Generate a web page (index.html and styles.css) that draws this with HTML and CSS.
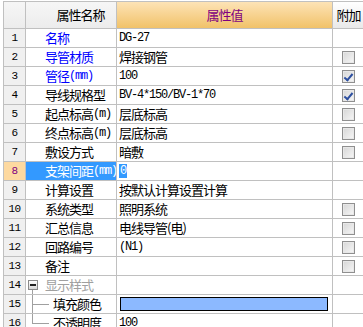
FILE: index.html
```html
<!DOCTYPE html>
<html lang="zh-CN">
  <head>
    <meta charset="UTF-8" />
    <title>属性编辑</title>
    <link rel="stylesheet" href="styles.css">
  </head>
  <body>
    <div class="grid">
      <div class="hd num"></div>
      <div class="hd name center">属性名称</div>
      <div class="hd value-hd">属性值</div>
      <div class="hd extra-hd">附加</div>

      <div class="num">1</div>
      <div class="name link">名称</div>
      <div class="value"><span class="latin">DG-27</span></div>
      <div class="extra"></div>

      <div class="num">2</div>
      <div class="name link">导管材质</div>
      <div class="value">焊接钢管</div>
      <div class="extra"><span class="check"></span></div>

      <div class="num">3</div>
      <div class="name link">管径<span class="latin">(mm)</span></div>
      <div class="value"><span class="latin">100</span></div>
      <div class="extra"><span class="check on"></span></div>

      <div class="num">4</div>
      <div class="name">导线规格型</div>
      <div class="value"><span class="latin">BV-4*150/BV-1*70</span></div>
      <div class="extra"><span class="check on"></span></div>

      <div class="num">5</div>
      <div class="name">起点标高<span class="latin">(m)</span></div>
      <div class="value">层底标高</div>
      <div class="extra"><span class="check"></span></div>

      <div class="num">6</div>
      <div class="name">终点标高<span class="latin">(m)</span></div>
      <div class="value">层底标高</div>
      <div class="extra"><span class="check"></span></div>

      <div class="num">7</div>
      <div class="name">敷设方式</div>
      <div class="value">暗敷</div>
      <div class="extra"><span class="check"></span></div>

      <div class="num current">8</div>
      <div class="name selected">支架间距<span class="latin">(mm)</span></div>
      <div class="value"><span class="latin editing">0</span></div>
      <div class="extra"></div>

      <div class="num">9</div>
      <div class="name">计算设置</div>
      <div class="value">按默认计算设置计算</div>
      <div class="extra"></div>

      <div class="num">10</div>
      <div class="name">系统类型</div>
      <div class="value">照明系统</div>
      <div class="extra"><span class="check"></span></div>

      <div class="num">11</div>
      <div class="name">汇总信息</div>
      <div class="value">电线导管(电)</div>
      <div class="extra"><span class="check"></span></div>

      <div class="num">12</div>
      <div class="name">回路编号</div>
      <div class="value"><span class="latin">(N1)</span></div>
      <div class="extra"><span class="check"></span></div>

      <div class="num">13</div>
      <div class="name">备注</div>
      <div class="value"></div>
      <div class="extra"><span class="check"></span></div>

      <div class="num">14</div>
      <div class="name group"><span class="toggle"></span>显示样式</div>
      <div class="value"></div>
      <div class="extra"></div>

      <div class="num">15</div>
      <div class="name child">填充颜色</div>
      <div class="value"><span class="swatch"></span></div>
      <div class="extra"></div>

      <div class="num">16</div>
      <div class="name child last">不透明度</div>
      <div class="value"><span class="latin">100</span></div>
      <div class="extra"></div>
    </div>
  </body>
</html>
```

FILE: styles.css
```css
body {
  margin: 0;
  padding: 1px 0 0 3px;
  background-color: #ffffff;
  font-family: "Noto Sans CJK SC", sans-serif;
  font-size: 13px;
  letter-spacing: -1px;
  color: #000000;
  overflow: hidden;
}

.grid {
  display: grid;
  grid-template-columns: 22px 91px 216px 32px;
  grid-template-rows: 27px;
  grid-auto-rows: 19px;
  border-left: 1px solid #c0c0c0;
  border-top: 1px solid #c0c0c0;
  width: max-content;
}

.grid > div {
  box-sizing: border-box;
  border-right: 1px solid #c0c0c0;
  border-bottom: 1px solid #c0c0c0;
  display: flex;
  align-items: center;
  white-space: nowrap;
  overflow: hidden;
  line-height: 18px;
}

.latin {
  font-family: "Liberation Mono", monospace;
  font-size: 12px;
  letter-spacing: -1.2px;
}

/* header */
.hd {
  background: linear-gradient(#f6f6f6, #ececec);
}

.center {
  justify-content: center;
}

.value-hd {
  justify-content: center;
  color: #800080;
  background: linear-gradient(#fde3b6, #f1c269) !important;
}

.extra-hd {
  justify-content: center;
  background: linear-gradient(#ffffff, #e9e9e9) !important;
}

/* body cells */
.num {
  background-color: #f0f0f0;
  justify-content: center;
  font-family: "Liberation Mono", monospace;
  font-size: 11px;
  letter-spacing: -0.6px;
}

.num.current {
  background-color: #fdd9a0;
  color: #800080;
}

.name {
  padding-left: 19px;
}

.name.link {
  color: #0000ff;
}

.name.selected {
  background-color: #3399ff;
  color: #ffffff;
}

.value {
  padding-left: 2px;
}

.extra {
  justify-content: center;
}

.editing {
  background-color: #3399ff;
  color: #ffffff;
  line-height: 14px;
  padding: 0 1px;
}

/* checkbox */
.check {
  box-sizing: border-box;
  width: 13px;
  height: 13px;
  border: 1px solid #8f8f8f;
  background: linear-gradient(135deg, #d6d6d6, #f7f7f7);
  box-shadow: inset 0 0 0 1px #e8e8e8;
  position: relative;
}

.check.on::after {
  content: "";
  position: absolute;
  left: 3px;
  top: 1px;
  width: 3px;
  height: 7px;
  border-right: 2px solid #2d4f9f;
  border-bottom: 2px solid #2d4f9f;
  transform: rotate(40deg);
}

/* tree */
.name.group {
  padding-left: 2px;
  color: #a0a0a0;
  position: relative;
}

.toggle {
  box-sizing: border-box;
  width: 10px;
  height: 10px;
  margin-right: 7px;
  border: 1px solid #8a8a8a;
  background: linear-gradient(#ffffff, #d8d8d8);
  position: relative;
}

.toggle::after {
  content: "";
  position: absolute;
  left: 1px;
  top: 3px;
  width: 6px;
  height: 2px;
  background-color: #222222;
}

.name.group::after {
  content: "";
  position: absolute;
  left: 6px;
  top: 14px;
  bottom: -1px;
  width: 1px;
  background-color: #a0a0a0;
}

.name.child {
  padding-left: 27px;
  position: relative;
}

.name.child::before {
  content: "";
  position: absolute;
  left: 6px;
  top: -1px;
  bottom: -1px;
  width: 1px;
  background-color: #a0a0a0;
}

.name.child.last::before {
  bottom: 9px;
}

.name.child::after {
  content: "";
  position: absolute;
  left: 6px;
  top: 9px;
  width: 17px;
  height: 1px;
  background-color: #a0a0a0;
}

.swatch {
  box-sizing: border-box;
  width: 208px;
  height: 14px;
  margin-left: 1px;
  border: 1px solid #000000;
  background-color: #8cb9ff;
}
```
